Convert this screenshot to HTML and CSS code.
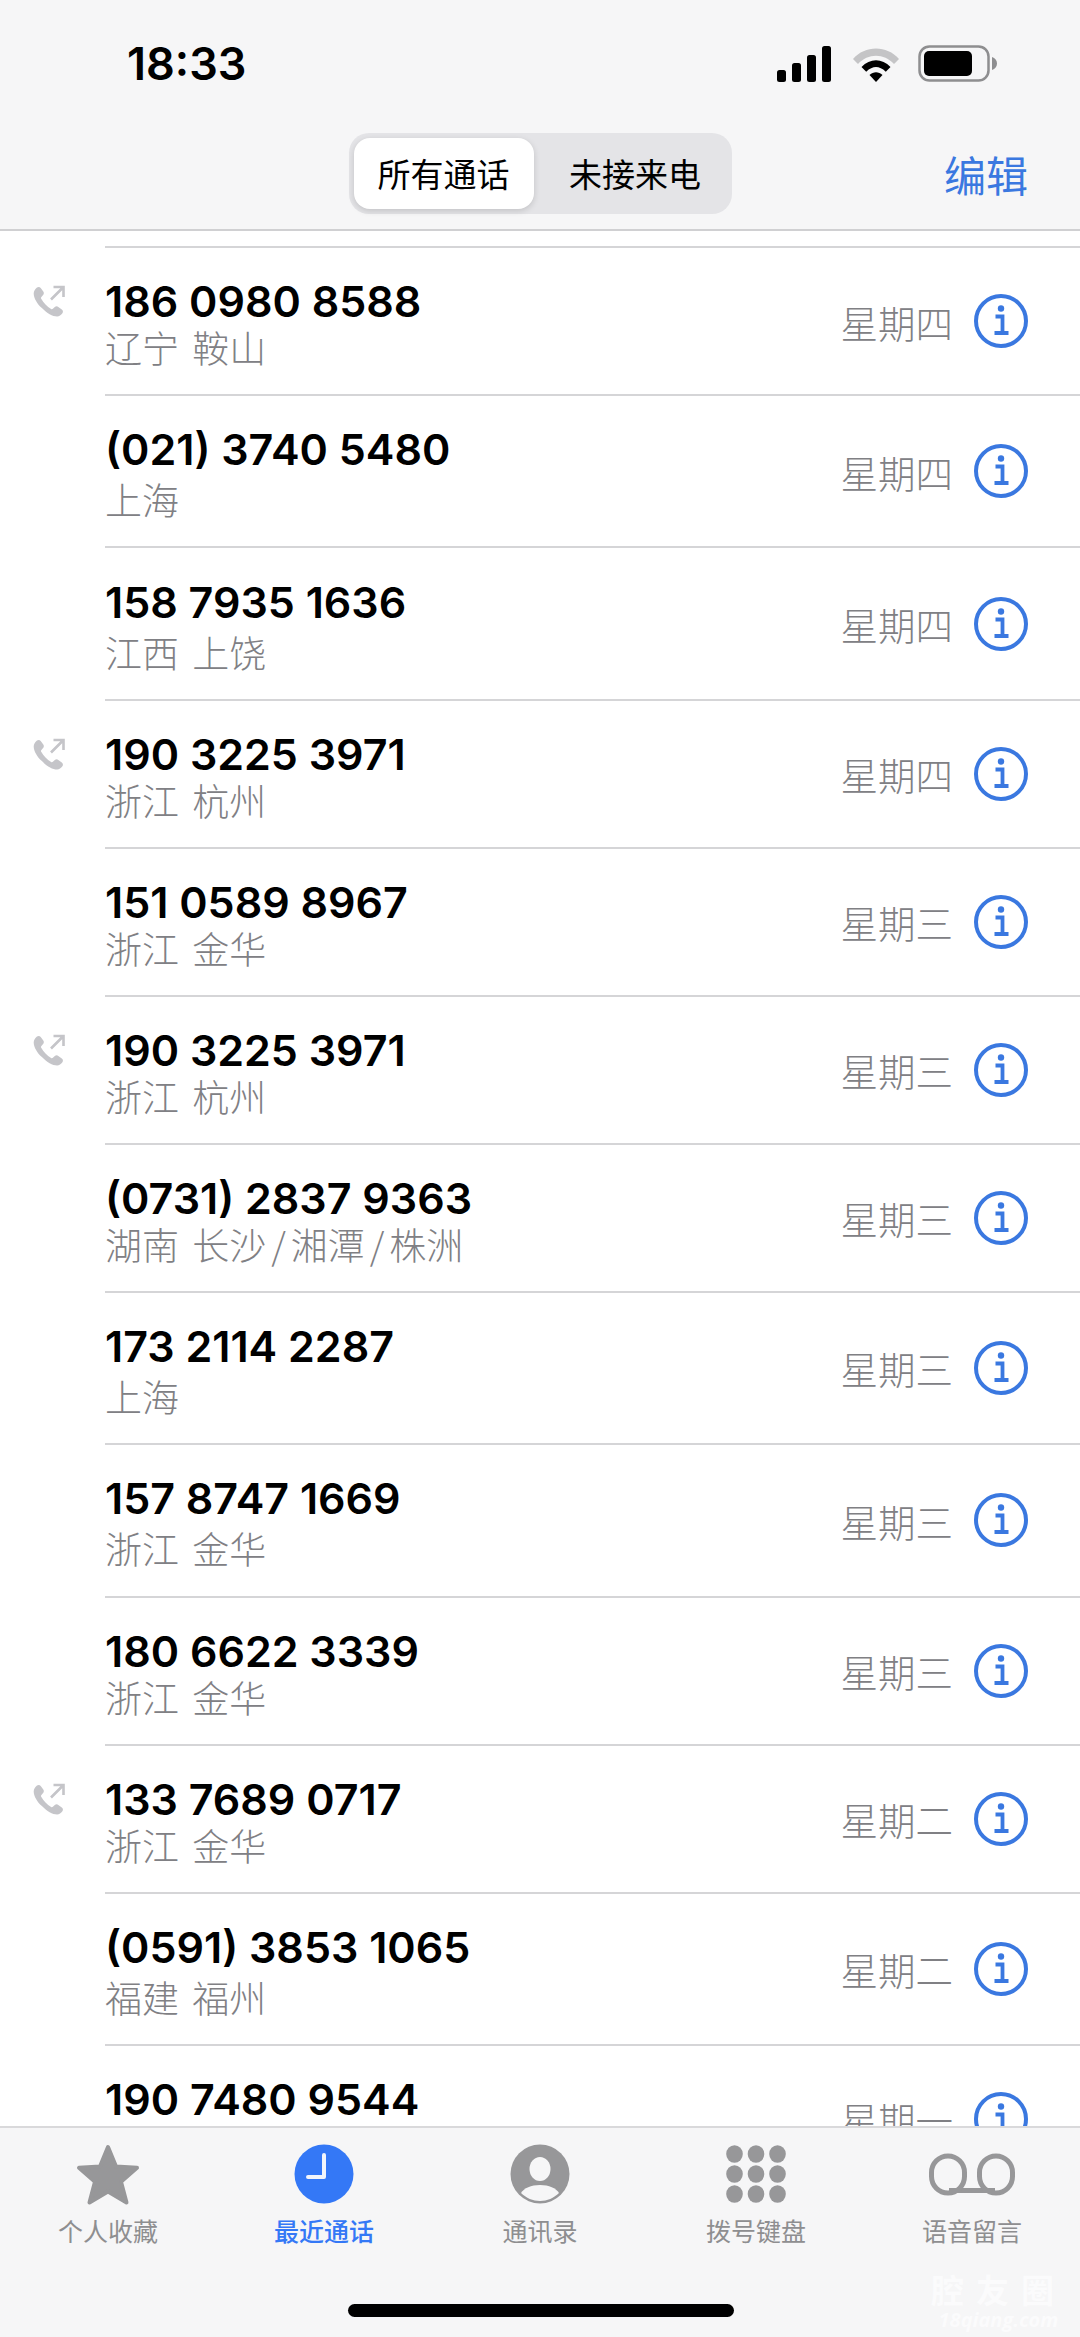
FILE: index.html
```html
<!DOCTYPE html>
<html lang="zh-CN">
<head>
  <meta charset="UTF-8" />
  <title>最近通话</title>
  <link rel="stylesheet" href="styles.css">
</head>
<body>
  <svg class="sprite" width="0" height="0">
    <symbol id="outgoing" viewBox="0 0 34 34">
      <path d="M5 2.500c1.200-.9 2.800-.7 3.700.5l2.600 3.600c.8 1.100.7 2.500-.2 3.500l-1.700 1.800c-.5.500-.6 1.200-.2 1.800 1.200 2.100 2.600 4 4.300 5.800 1.700 1.800 3.600 3.300 5.600 4.500.6.400 1.300.3 1.800-.2l1.900-1.700c1-.9 2.400-1 3.500-.2l3.500 2.600c1.300.9 1.500 2.600.6 3.800-1.400 1.900-3.200 3.300-5.300 3.300-4.500 0-10.300-3.400-15.200-8.500C5 18.800 1.700 13 1.700 8.500c0-2.200 1.400-4.400 3.300-6z" fill="#c5c5c9"/>
      <path d="M19 14.500 31 2.500M21.500 2h10v10" fill="none" stroke="#c5c5c9" stroke-width="2.600"/>
    </symbol>
    <symbol id="info" viewBox="0 0 54 54">
      <circle cx="27" cy="27" r="25" fill="none" stroke="#3a78e0" stroke-width="4"/>
      <circle cx="27" cy="14.500" r="3.200" fill="#3a78e0"/>
      <path d="M21.500 22.500h7v16M20.500 39h14" fill="none" stroke="#3a78e0" stroke-width="3.800"/>
    </symbol>
  </svg>

  <header class="top">
    <div class="status">
      <span class="time">18:33</span>
      <div class="status-icons">
        <svg width="58" height="36" viewBox="0 0 58 36">
          <rect x="1" y="24" width="9" height="12" rx="2.500"/>
          <rect x="16" y="17" width="9" height="19" rx="2.500"/>
          <rect x="31" y="9" width="9" height="27" rx="2.500"/>
          <rect x="46" y="0" width="9" height="36" rx="2.500"/>
        </svg>
        <svg width="50" height="36" viewBox="0 0 48 36">
          <path d="M1 13C13-1 35-1 47 13l-5 5C32 7 16 7 6 18z" fill="#c4c4c6"/>
          <path d="M9.500 21C18 12 30 12 38.500 21l-4.700 4.700C27 19.500 21 19.500 14.200 25.700z"/>
          <path d="M17.500 29c4-3.800 9-3.800 13 0L24 36z"/>
        </svg>
        <svg width="80" height="38" viewBox="0 0 80 38">
          <rect x="1.500" y="1.500" width="69" height="34" rx="10" fill="none" stroke="#8e8e90" stroke-width="2.500"/>
          <rect x="6" y="6" width="48" height="25" rx="5"/>
          <path d="M74 12c3 1 5 3.500 5 6.500s-2 5.500-5 6.500z" fill="#8e8e90"/>
        </svg>
      </div>
    </div>
    <div class="nav">
      <div class="segments">
        <span class="segment active">所有通话</span>
        <span class="segment">未接来电</span>
      </div>
      <span class="edit">编辑</span>
    </div>
  </header>

  <main class="list">
    <div class="row"><svg class="call-icon"><use href="#outgoing"/></svg><div class="who"><div class="num">186 0980 8588</div><div class="place">辽宁 鞍山</div></div><span class="day">星期四</span><svg class="info"><use href="#info"/></svg></div>
    <div class="row tall"><div class="who"><div class="num">(021) 3740 5480</div><div class="place">上海</div></div><span class="day">星期四</span><svg class="info"><use href="#info"/></svg></div>
    <div class="row tall"><div class="who"><div class="num">158 7935 1636</div><div class="place">江西 上饶</div></div><span class="day">星期四</span><svg class="info"><use href="#info"/></svg></div>
    <div class="row"><svg class="call-icon"><use href="#outgoing"/></svg><div class="who"><div class="num">190 3225 3971</div><div class="place">浙江 杭州</div></div><span class="day">星期四</span><svg class="info"><use href="#info"/></svg></div>
    <div class="row"><div class="who"><div class="num">151 0589 8967</div><div class="place">浙江 金华</div></div><span class="day">星期三</span><svg class="info"><use href="#info"/></svg></div>
    <div class="row"><svg class="call-icon"><use href="#outgoing"/></svg><div class="who"><div class="num">190 3225 3971</div><div class="place">浙江 杭州</div></div><span class="day">星期三</span><svg class="info"><use href="#info"/></svg></div>
    <div class="row"><div class="who"><div class="num">(0731) 2837 9363</div><div class="place">湖南 长沙<span class="slash">/</span>湘潭<span class="slash">/</span>株洲</div></div><span class="day">星期三</span><svg class="info"><use href="#info"/></svg></div>
    <div class="row tall"><div class="who"><div class="num">173 2114 2287</div><div class="place">上海</div></div><span class="day">星期三</span><svg class="info"><use href="#info"/></svg></div>
    <div class="row tall"><div class="who"><div class="num">157 8747 1669</div><div class="place">浙江 金华</div></div><span class="day">星期三</span><svg class="info"><use href="#info"/></svg></div>
    <div class="row"><div class="who"><div class="num">180 6622 3339</div><div class="place">浙江 金华</div></div><span class="day">星期三</span><svg class="info"><use href="#info"/></svg></div>
    <div class="row"><svg class="call-icon"><use href="#outgoing"/></svg><div class="who"><div class="num">133 7689 0717</div><div class="place">浙江 金华</div></div><span class="day">星期二</span><svg class="info"><use href="#info"/></svg></div>
    <div class="row tall"><div class="who"><div class="num">(0591) 3853 1065</div><div class="place">福建 福州</div></div><span class="day">星期二</span><svg class="info"><use href="#info"/></svg></div>
    <div class="row"><div class="who"><div class="num">190 7480 9544</div><div class="place">&nbsp;</div></div><span class="day">星期一</span><svg class="info"><use href="#info"/></svg></div>
  </main>

  <nav class="tabs">
    <div class="tab">
      <svg width="66" height="62" viewBox="0 0 66 62"><polygon points="33,3 41,22.500 62,23.800 46,37.800 51.500,58.500 33,47.500 14.500,58.500 20,37.800 4,23.800 25,22.500" fill="#979799" stroke="#979799" stroke-width="4" stroke-linejoin="round"/></svg>
      <span>个人收藏</span>
    </div>
    <div class="tab current">
      <svg width="60" height="60" viewBox="0 0 60 60"><circle cx="30" cy="30" r="29.500" fill="#3478f6"/><path d="M30 11v22H14" fill="none" stroke="#f2f5fb" stroke-width="4" stroke-linecap="round" stroke-linejoin="round"/></svg>
      <span>最近通话</span>
    </div>
    <div class="tab">
      <svg width="60" height="60" viewBox="0 0 60 60"><circle cx="30" cy="30" r="29.500" fill="#979799"/><ellipse cx="30" cy="25" rx="10.500" ry="12" fill="#f6f6f7"/><path d="M11 49c3-5 10-8 19-8s16 3 19 8c-5 5-12 8-19 8s-14-3-19-8z" fill="#f6f6f7"/></svg>
      <span>通讯录</span>
    </div>
    <div class="tab">
      <svg width="60" height="60" viewBox="0 0 60 60" fill="#979799">
        <ellipse cx="8.500" cy="10" rx="8.300" ry="8.800"/><ellipse cx="30" cy="10" rx="8.300" ry="8.800"/><ellipse cx="51.500" cy="10" rx="8.300" ry="8.800"/>
        <ellipse cx="8.500" cy="30" rx="8.300" ry="8.800"/><ellipse cx="30" cy="30" rx="8.300" ry="8.800"/><ellipse cx="51.500" cy="30" rx="8.300" ry="8.800"/>
        <ellipse cx="8.500" cy="50" rx="8.300" ry="8.800"/><ellipse cx="30" cy="50" rx="8.300" ry="8.800"/><ellipse cx="51.500" cy="50" rx="8.300" ry="8.800"/>
      </svg>
      <span>拨号键盘</span>
    </div>
    <div class="tab">
      <svg width="86" height="60" viewBox="0 0 86 60"><path d="M20 46.500h46" stroke="#979799" stroke-width="5" fill="none"/><rect x="2.500" y="12" width="33" height="37" rx="16.500" fill="none" stroke="#979799" stroke-width="5"/><rect x="50.500" y="12" width="33" height="37" rx="16.500" fill="none" stroke="#979799" stroke-width="5"/></svg>
      <span>语音留言</span>
    </div>
    <div class="home-bar"></div>
    <div class="watermark"><b>腔友圈</b><i>18qiang.com</i></div>
  </nav>
</body>
</html>
```

FILE: styles.css
```css
* {
  box-sizing: border-box;
}

html, body {
  margin: 0;
  height: 100%;
}

body {
  width: 1080px;
  height: 2337px;
  display: flex;
  flex-direction: column;
  overflow: hidden;
  background: #fff;
  color: #000;
  font-family: "Noto Sans CJK SC", "Noto Sans", sans-serif;
}

.sprite {
  display: none;
}

/* top bar */
.top {
  height: 231px;
  flex-shrink: 0;
  background: #f6f6f7;
  border-bottom: 2px solid #d0d0d2;
}

.status {
  height: 133px;
  padding: 41px 82px 0 127px;
  display: flex;
  justify-content: space-between;
  align-items: flex-start;
}

.time {
  font-family: Inter, sans-serif;
  font-weight: 600;
  font-size: 45px;
  line-height: 46px;
}

.status-icons {
  display: flex;
  align-items: center;
  gap: 17px;
  margin-top: 4px;
}

.nav {
  position: relative;
  display: flex;
  justify-content: center;
}

.segments {
  width: 383px;
  height: 81px;
  padding: 5px;
  display: flex;
  background: #e4e4e7;
  border-radius: 20px;
}

.segment {
  flex: 1;
  padding-left: 10px;
  line-height: 71px;
  text-align: center;
  font-size: 33px;
}

.segment.active {
  flex: none;
  width: 180px;
  padding-left: 0;
  background: #fff;
  border-radius: 16px;
  box-shadow: 0 2px 6px rgba(0, 0, 0, 0.15);
}

.edit {
  position: absolute;
  right: 52px;
  top: 0;
  line-height: 81px;
  font-size: 42px;
  color: #3a78e0;
}

/* call list */
.list {
  flex: 1;
  min-height: 0;
  overflow: hidden;
  padding-top: 15px;
}

.row {
  position: relative;
  height: 148px;
  margin-left: 105px;
  padding-right: 52px;
  display: flex;
  align-items: center;
  border-top: 2px solid #d5d5d7;
}

.row.tall {
  height: 152.400px;
}

.call-icon {
  position: absolute;
  left: -73px;
  top: 37px;
  width: 34px;
  height: 34px;
}

.who {
  flex: 1;
  margin-top: 6px;
}

.num {
  font-family: Inter, sans-serif;
  font-weight: 600;
  font-size: 43px;
  line-height: 46px;
}

.place {
  font-size: 37px;
  font-weight: 300;
  line-height: 46px;
  word-spacing: 5px;
  color: #808084;
}

.tall .place {
  margin-top: 4px;
}

.slash {
  padding: 0 5px;
}

.day {
  font-size: 37.500px;
  font-weight: 300;
  color: #808084;
  margin-right: 21px;
}

.info {
  width: 54px;
  height: 54px;
}

/* tab bar */
.tabs {
  position: relative;
  height: 211px;
  flex-shrink: 0;
  padding: 16px 0 0;
  display: flex;
  background: #f6f6f7;
  border-top: 2px solid #d9d9db;
}

.tab {
  flex: 1;
  height: 102px;
  display: flex;
  flex-direction: column;
  align-items: center;
  justify-content: space-between;
  color: #8e8e90;
  font-size: 25px;
}

.tab span {
  line-height: 32px;
}

.tab.current {
  color: #3478f6;
  font-weight: 500;
}

.home-bar {
  position: absolute;
  left: 348px;
  bottom: 20px;
  width: 386px;
  height: 13px;
  border-radius: 7px;
  background: #000;
}

.watermark {
  position: absolute;
  right: 14px;
  bottom: 5px;
  display: flex;
  flex-direction: column;
  align-items: center;
  color: #fbfbfc;
}

.watermark b {
  font-size: 33px;
  line-height: 38px;
  letter-spacing: 12px;
}

.watermark i {
  font-family: "Open Sans", sans-serif;
  font-weight: 700;
  font-size: 20px;
  line-height: 24px;
}
```
